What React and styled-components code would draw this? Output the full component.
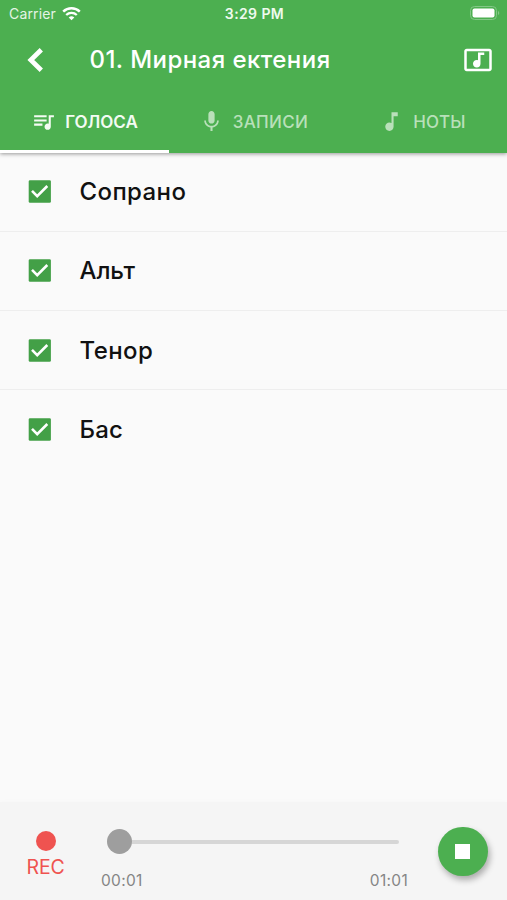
import React from "react";
import styled, { createGlobalStyle } from "styled-components";
import {
  MdMusicVideo,
  MdQueueMusic,
  MdMic,
  MdMusicNote,
} from "react-icons/md";

const GlobalStyle = createGlobalStyle`
  * { box-sizing: border-box; }
  body { margin: 0; }
`;

const Screen = styled.div`
  display: flex;
  flex-direction: column;
  width: 507px;
  height: 900px;
  overflow: hidden;
  background: #fafafa;
  color: #111;
  font-family: Inter, "Noto Sans", sans-serif;
`;

const Header = styled.header`
  height: 152.5px;
  flex: none;
  background: #4caf50;
  color: #fff;
  box-shadow: 0 1px 4px rgba(0, 0, 0, 0.4);
`;

const StatusBar = styled.div`
  display: grid;
  grid-template-columns: 1fr auto 1fr;
  align-items: center;
  height: 27px;
  padding: 0 7px 0 9px;
  line-height: 16px;
`;

const Carrier = styled.div`
  display: flex;
  align-items: center;
  gap: 6px;
  font-size: 14px;
  letter-spacing: 0.15px;
  color: #e4f4e5;
`;

const Clock = styled.div`
  font-size: 14px;
  font-weight: 600;
  letter-spacing: 0.4px;
  color: #eefaee;
`;

const BatteryIcon = styled.svg`
  justify-self: end;
  margin-bottom: 1px;
`;

const TitleBar = styled.div`
  display: flex;
  align-items: center;
  height: 65px;
  padding: 0 14.5px 0 12px;
`;

const Title = styled.h1`
  flex: 1;
  margin: 0 0 0 29.5px;
  font-size: 24px;
  font-weight: 500;
  line-height: 32px;
  letter-spacing: 0.45px;
  white-space: nowrap;
`;

const Tabs = styled.nav`
  display: grid;
  grid-template-columns: repeat(3, 1fr);
  height: 60.5px;
`;

const Tab = styled.div`
  display: flex;
  align-items: center;
  justify-content: center;
  gap: 9px;
  padding-top: 2px;
  border-bottom: 3px solid ${(p) => (p.$active ? "#fff" : "transparent")};
  color: ${(p) => (p.$active ? "#f3fbf3" : "#b9e0ba")};
  font-size: 17px;
  font-weight: ${(p) => (p.$active ? 600 : 500)};
  letter-spacing: ${(p) => p.$spacing}px;
`;

const Voices = styled.ul`
  flex: 1;
  margin: 0;
  padding: 0;
  list-style: none;
`;

const Voice = styled.li`
  display: flex;
  align-items: center;
  gap: 28.5px;
  height: 79.3px;
  padding: 0 28px;
  border-bottom: 1px solid #eeeeee;
  font-size: 24px;
  font-weight: 500;
  letter-spacing: ${(p) => p.$spacing}px;
  &:last-child { border-bottom-color: transparent; }
`;

const Player = styled.footer`
  display: flex;
  flex: none;
  height: 98px;
  background: #f5f5f5;
  box-shadow: 0 0 5px rgba(0, 0, 0, 0.025);
`;

const Record = styled.div`
  display: flex;
  flex-direction: column;
  align-items: center;
  width: 91px;
  padding-top: 29px;
  color: #ef5350;
  font-size: 19.5px;
  line-height: 24px;
  letter-spacing: -0.2px;
`;

const RecordDot = styled.span`
  width: 20px;
  height: 20px;
  margin-bottom: 4px;
  border-radius: 50%;
  background: #ef5350;
`;

const Progress = styled.div`
  width: 317px;
  padding: 27px 0 0 10px;
`;

const Slider = styled.div`
  display: flex;
  align-items: center;
  height: 25px;
  padding-left: 6px;
  padding-right: 9px;
`;

const Thumb = styled.span`
  width: 25px;
  height: 25px;
  border-radius: 50%;
  background: #9e9e9e;
`;

const Track = styled.span`
  flex: 1;
  height: 4px;
  border-radius: 0 2px 2px 0;
  background: #d6d6d6;
`;

const Times = styled.div`
  display: flex;
  justify-content: space-between;
  margin-top: 17px;
  color: #858585;
  font-size: 15.5px;
  line-height: 20px;
  letter-spacing: 0.3px;
`;

const StopButton = styled.button`
  display: grid;
  place-items: center;
  width: 49.5px;
  height: 49.5px;
  margin: 24.5px 0 0 30px;
  padding: 0;
  border: 0;
  border-radius: 50%;
  background: #4caf50;
  box-shadow: 2px 4px 6px rgba(0, 0, 0, 0.3);
`;

const StopSquare = styled.span`
  width: 15px;
  height: 15px;
  background: #fff;
`;

function BackIcon() {
  return (
    <svg width="48" height="48" viewBox="0 0 48 48" fill="none">
      <path d="M29.3 13.7 18.8 24l10.5 10.3" stroke="#fff" strokeWidth="4.7" />
    </svg>
  );
}

function Wifi() {
  return (
    <svg width="19" height="14" viewBox="0 0 19 14" fill="none" stroke="#fff">
      <path d="M1.2 4.7a12 12 0 0 1 16.6 0" strokeWidth="2.5" />
      <path d="M4.2 8a7.6 7.6 0 0 1 10.6 0" strokeWidth="2.3" />
      <path d="M9.5 13.2 6.7 10.5a4 4 0 0 1 5.6 0Z" fill="#fff" stroke="none" />
    </svg>
  );
}

function Battery() {
  return (
    <BatteryIcon width="30" height="14" viewBox="0 0 30 14">
      <rect x="0.5" y="0.5" width="26" height="13" rx="4" fill="none" stroke="#83c786" />
      <rect x="2.5" y="2.5" width="22" height="9" rx="2" fill="#fff" />
      <path d="M28 5v4a2.2 2.2 0 0 0 0-4Z" fill="#83c786" />
    </BatteryIcon>
  );
}

function Checkbox() {
  return (
    <svg width="23" height="23" viewBox="0 0 23 23">
      <rect x="0.7" y="0.3" width="22.2" height="22.4" rx="1.3" fill="#43a047" />
      <path d="m4 10.8 5.2 5.3L19.3 6" fill="none" stroke="#fff" strokeWidth="2.6" />
    </svg>
  );
}

const tabs = [
  { label: "ГОЛОСА", Icon: MdQueueMusic, active: true, spacing: 0 },
  { label: "ЗАПИСИ", Icon: MdMic, spacing: 0.35 },
  { label: "НОТЫ", Icon: MdMusicNote, spacing: 0.3 },
];

const voices = [
  { name: "Сопрано", spacing: 0.4 },
  { name: "Альт", spacing: -0.1 },
  { name: "Тенор", spacing: 0.4 },
  { name: "Бас", spacing: 0.2 },
];

export default function App() {
  return (
    <>
      <GlobalStyle />
      <Screen>
        <Header>
          <StatusBar>
            <Carrier>
              Carrier
              <Wifi />
            </Carrier>
            <Clock>3:29 PM</Clock>
            <Battery />
          </StatusBar>
          <TitleBar>
            <BackIcon />
            <Title>01. Мирная ектения</Title>
            <MdMusicVideo size={30} />
          </TitleBar>
          <Tabs>
            {tabs.map(({ label, Icon, active, spacing }) => (
              <Tab key={label} $active={active} $spacing={spacing}>
                <Icon size={25} />
                {label}
              </Tab>
            ))}
          </Tabs>
        </Header>
        <Voices>
          {voices.map(({ name, spacing }) => (
            <Voice key={name} $spacing={spacing}>
              <Checkbox />
              {name}
            </Voice>
          ))}
        </Voices>
        <Player>
          <Record>
            <RecordDot />
            REC
          </Record>
          <Progress>
            <Slider>
              <Thumb />
              <Track />
            </Slider>
            <Times>
              <span>00:01</span>
              <span>01:01</span>
            </Times>
          </Progress>
          <StopButton aria-label="Stop">
            <StopSquare />
          </StopButton>
        </Player>
      </Screen>
    </>
  );
}
